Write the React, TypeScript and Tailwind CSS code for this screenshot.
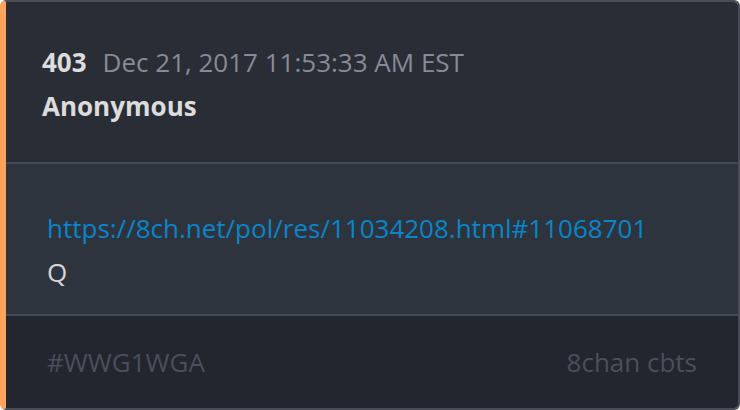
import React from 'react';

const App: React.FC = () => {
  return (
    <div className="h-[410px] w-[740px] bg-white font-['Open_Sans',sans-serif]">
      <div className="flex h-full flex-col overflow-hidden rounded-[6px] border-2 border-l-[6px] border-[#474c57] border-l-[#ffa35c]">
        {/* Header */}
        <div className="flex h-[160px] flex-col bg-[#292d36] pl-[36px] pt-[42px]">
          <div className="flex items-baseline gap-[16px] text-[26px] leading-[36px]">
            <span className="font-bold text-[#dcdcdc]">403</span>
            <span className="text-[#878b98]">Dec 21, 2017 11:53:33 AM EST</span>
          </div>
          <div className="mt-[8px] text-[26px] font-bold leading-[36px] text-[#dcdcdc]">
            Anonymous
          </div>
        </div>
        <div className="h-[2px] bg-[#444a55]" />
        {/* Body */}
        <div className="flex h-[150px] flex-col bg-[#2e343e] pl-[41px] pt-[42px]">
          <a href="#" className="text-[26px] leading-[44px] text-[#0a85c9]">
            https://8ch.net/pol/res/11034208.html#11068701
          </a>
          <div className="text-[26px] leading-[44px] text-[#d6d6d6]">Q</div>
        </div>
        <div className="h-[2px] bg-[#444a55]" />
        {/* Footer */}
        <div className="flex flex-1 items-center justify-between bg-[#22262e] px-[41px] text-[26px] text-[#4a4f5b]">
          <span>#WWG1WGA</span>
          <span>8chan cbts</span>
        </div>
      </div>
    </div>
  );
};

export default App;
